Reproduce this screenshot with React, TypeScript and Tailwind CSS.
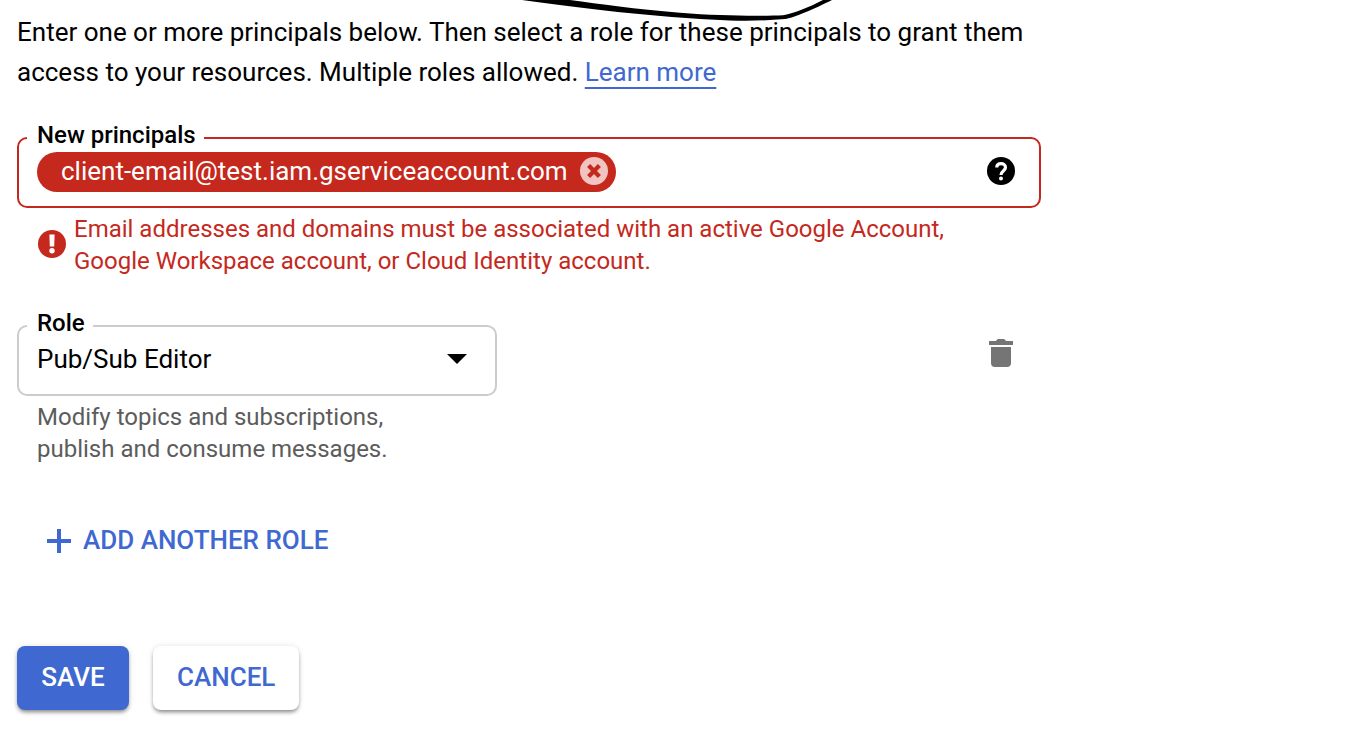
import React, { useState } from "react";

function ErrorIcon() {
  return (
    <svg viewBox="0 0 28 28" className="size-7 shrink-0" aria-hidden="true">
      <circle cx="14" cy="14" r="14" fill="#c5281c" />
      <path d="M11.4 4.4h5.2l-.4 12h-4.4z" fill="#fff" />
      <circle cx="14" cy="20.8" r="2.7" fill="#fff" />
    </svg>
  );
}

function HelpIcon() {
  return (
    <svg viewBox="0 0 28 28" className="size-7" aria-hidden="true">
      <circle cx="14" cy="14" r="14" fill="#000" />
      <path
        d="M9.8 10.6C9.8 8.200 11.400 6.700 14 6.700s4.500 1.500 4.500 3.900c0 3.100-4.500 3.300-4.500 7.400"
        fill="none"
        stroke="#fff"
        strokeWidth="3.2"
      />
      <circle cx="14" cy="21.500" r="2" fill="#fff" />
    </svg>
  );
}

function RemoveIcon() {
  return (
    <svg viewBox="0 0 28 28" className="size-7" aria-hidden="true">
      <circle cx="14" cy="14" r="14" fill="#f1c4c1" />
      <path d="M8.6 8.6l10.800 10.800M19.400 8.600L8.600 19.400" stroke="#c5281c" strokeWidth="4.3" />
    </svg>
  );
}

function TrashIcon() {
  return (
    <svg viewBox="0 0 24 28" className="h-7 w-6" aria-hidden="true" fill="#757575">
      <path d="M0 2h7c.8-1.4 1.6-2 3-2h4c1.4 0 2.2.6 3 2h7v4H0zM2 8h20v16c0 2.6-1.4 4-4 4H6c-2.6 0-4-1.4-4-4z" />
    </svg>
  );
}

export default function App() {
  const [principals, setPrincipals] = useState(["client-email@test.iam.gserviceaccount.com"]);

  return (
    <div className="relative overflow-hidden bg-white font-['Roboto',sans-serif] text-[26px] text-black">
      <svg
        viewBox="0 0 350 24"
        className="pointer-events-none absolute top-0 left-[500px] h-6 w-[350px]"
        aria-hidden="true"
      >
        <path
          d="M22 0C80 8 150 17 230 20.500C252 21 268 20.500 285 19C293 18 314 9 332 0L323 0C310 7 292 14 283 15.300C260 16.200 220 16 180 12.800C135 9 100 4 70 0Z"
          fill="#000"
        />
      </svg>

      <form className="flex max-w-[1058px] flex-col px-[17px] pt-3 pb-9" onSubmit={(e) => e.preventDefault()}>
        <p className="leading-10">
          Enter one or more principals below. Then select a role for these principals to grant them
          access to your resources. Multiple roles allowed.{" "}
          <a
            href="#learn-more"
            className="text-[#3f69d0] underline decoration-2 underline-offset-[6px] [text-decoration-skip-ink:none]"
          >
            Learn more
          </a>
        </p>

        <fieldset className="mt-8 min-w-0 rounded-[10px] border-2 border-[#c5281c] pb-3.5">
          <legend className="ml-2 pr-2 pb-1.5 pl-2.5 text-2xl leading-[22px] font-medium">
            <label htmlFor="principals">New principals</label>
          </legend>
          <div className="flex h-10 items-center gap-2 pr-6 pl-[18px]">
            {principals.map((name) => (
              <span
                key={name}
                className="flex h-10 items-center gap-3 rounded-full bg-[#c5281c] pr-2 pb-0.5 pl-6 text-white"
              >
                {name}
                <button
                  type="button"
                  aria-label={`Remove ${name}`}
                  onClick={() => setPrincipals(principals.filter((p) => p !== name))}
                >
                  <RemoveIcon />
                </button>
              </span>
            ))}
            <input id="principals" type="text" className="h-10 min-w-0 flex-1 outline-none" />
            <button type="button" aria-label="Help" className="pb-0.5">
              <HelpIcon />
            </button>
          </div>
        </fieldset>

        <div className="mt-[5px] flex items-start gap-2 pl-[21px] text-2xl leading-8 text-[#c5281c]">
          <div className="pt-[17px]">
            <ErrorIcon />
          </div>
          <p className="max-w-[900px]">
            Email addresses and domains must be associated with an active Google Account, Google
            Workspace account, or Cloud Identity account.
          </p>
        </div>

        <div className="mt-[35px] flex items-start justify-between pr-7">
          <div className="w-[480px]">
            <fieldset className="min-w-0 rounded-[10px] border-2 border-[#cccccc] pb-3.5">
              <legend className="ml-2 pr-2 pb-1.5 pl-2.5 text-2xl leading-[22px] font-medium">
                <label htmlFor="role">Role</label>
              </legend>
              <div className="relative flex h-10 items-center pb-0.5">
                <select id="role" className="w-full appearance-none pr-14 pl-[18px] outline-none">
                  <option>Pub/Sub Editor</option>
                </select>
                <svg
                  viewBox="0 0 20 10"
                  className="pointer-events-none absolute right-7 h-2.5 w-5"
                  aria-hidden="true"
                >
                  <path d="M0 0h20L10 10z" fill="#000" />
                </svg>
              </div>
            </fieldset>
            <p className="mt-[5px] max-w-[400px] pl-5 text-2xl leading-8 text-[#5c5c5c]">
              Modify topics and subscriptions, publish and consume messages.
            </p>
          </div>
          <button type="button" aria-label="Delete role" className="mt-[27px]">
            <TrashIcon />
          </button>
        </div>

        <button
          type="button"
          className="mt-11 flex h-16 items-center gap-3 self-start px-[30px] font-medium text-[#3f69d0]"
        >
          <svg viewBox="0 0 24 24" className="size-6" aria-hidden="true">
            <path d="M10 0h4v10h10v4H14v10h-4V14H0v-4h10z" fill="#3f69d0" />
          </svg>
          <span className="pb-0.5">ADD ANOTHER ROLE</span>
        </button>

        <div className="mt-[73px] flex gap-6">
          <button
            type="submit"
            className="h-16 min-w-28 rounded-lg bg-[#3f69d0] px-6 pb-0.5 font-medium text-white shadow-[0_3px_4px_-1px_rgba(0,0,0,0.45),0_0_6px_rgba(0,0,0,0.1)]"
          >
            SAVE
          </button>
          <button
            type="button"
            className="h-16 rounded-lg bg-white px-6 pb-0.5 font-medium text-[#3f69d0] shadow-[0_3px_4px_-1px_rgba(0,0,0,0.45),0_0_6px_rgba(0,0,0,0.1)]"
          >
            CANCEL
          </button>
        </div>
      </form>
    </div>
  );
}
